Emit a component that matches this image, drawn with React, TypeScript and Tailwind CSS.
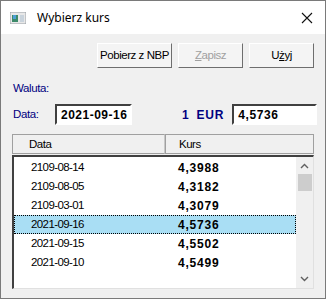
import React from "react";

type Rate = { date: string, rate: string };

const rates: Rate[] = [
	{ date: "2109-08-14", rate: "4,3988" },
	{ date: "2109-08-05", rate: "4,3182" },
	{ date: "2109-03-01", rate: "4,3079" },
	{ date: "2021-09-16", rate: "4,5736" },
	{ date: "2021-09-15", rate: "4,5502" },
	{ date: "2021-09-10", rate: "4,5499" },
];

const selected = "2021-09-16";

function TitleBar() {
	return (
	<div className="flex flex-row items-center h-[33px] bg-white pl-[9px] pr-[12px]">
		<svg width="16" height="12" viewBox="0 0 16 12" className="mr-[11px]">
			<rect x="0" y="0" width="16" height="12" fill="#e8e8e8" stroke="#9aa0a6" />
			<rect x="2" y="3" width="6" height="7" fill="#3d8a6a" />
			<rect x="3" y="3" width="3" height="4" fill="#4e9fd6" />
			<rect x="10" y="3" width="4" height="7" fill="#c9d3dc" />
		</svg>
		<span className="text-[12px] text-black" style={{ fontFamily: "'Noto Sans', sans-serif" }}>Wybierz kurs</span>
		<svg width="12" height="12" viewBox="0 0 12 12" className="ml-auto">
			<path d="M1 1 L11 11 M11 1 L1 11" stroke="#111" strokeWidth="1.1" />
		</svg>
	</div>
	);
}

function WinButton(props: { children: React.ReactNode, disabled?: boolean, width: string }) {
	const text = props.disabled ? "text-[#a0a0a0]" : "text-black";
	return (
	<div className={`${props.width} h-[25px] flex items-center justify-center whitespace-nowrap bg-[#f4f4f4] border border-t-white border-l-white border-r-[#6e6e6e] border-b-[#6e6e6e] text-[11.5px] tracking-[-0.45px] ${text}`}>
		{props.children}
	</div>
	);
}

function ListRow(props: { row: Rate }) {
	const isSel = props.row.date === selected;
	const sel = isSel ? "bg-[#a9def4] border border-dotted border-black" : "border border-transparent";
	return (
	<div className={`flex flex-row items-center h-[19px] ${sel}`}>
		<span className="w-[163px] pl-[16px] text-[11.5px] tracking-[-0.6px]">{props.row.date}</span>
		<span className="font-bold text-[12px] tracking-[0.8px]">{props.row.rate}</span>
	</div>
	);
}

export default function App() {
	return (
	<div className="w-[326px] h-[299px] bg-[#f0f0f0] border border-[#7a7a7a] flex flex-col text-black" style={{ fontFamily: "'Liberation Sans', Arial, sans-serif" }}>
		<TitleBar />
		<div className="flex flex-row justify-end gap-[6px] pr-[11px] pt-[9px]">
			<WinButton width="w-[75px]">Pobierz z NBP</WinButton>
			<WinButton width="w-[65px]" disabled><span><u>Z</u>apisz</span></WinButton>
			<WinButton width="w-[65px]"><span>U<u>ż</u>yj</span></WinButton>
		</div>

		<div className="text-[#000080] text-[11.5px] tracking-[-0.4px] pl-[12px] mt-[12px]">Waluta:</div>

		<div className="flex flex-row items-center pl-[12px] mt-[7px]">
			<span className="text-[#000080] text-[11.5px] tracking-[-0.4px] w-[42px]">Data:</span>
			<div className="w-[77px] h-[21px] bg-white border-2 border-t-[#404040] border-l-[#404040] border-r-white border-b-white flex items-center pl-[4px] font-bold text-[12px] tracking-[0.5px]">2021-09-16</div>
			<span className="text-[#000080] font-bold text-[12px] ml-[50px] tracking-[0.8px]">1</span>
			<span className="text-[#000080] font-bold text-[12px] ml-[7px] tracking-[0.8px]">EUR</span>
			<div className="w-[85px] h-[21px] ml-[8px] bg-white border-2 border-t-[#404040] border-l-[#404040] border-r-white border-b-white flex items-center pl-[4px] font-bold text-[12px] tracking-[0.6px]">4,5736</div>
		</div>

		<div className="mx-[11px] mt-[9px] flex flex-col">
			<div className="flex flex-row h-[20px] text-[11.5px] tracking-[-0.5px]">
				<div className="w-[153px] border border-[#a0a0a0] border-r-[#c8c8c8] bg-[#f0f0f0] pl-[16px] flex items-center">Data</div>
				<div className="flex-grow border border-[#a0a0a0] bg-[#f0f0f0] pl-[13px] flex items-center">Kurs</div>
			</div>
			<div className="h-[134px] mt-[1px] bg-white border-t-2 border-l-2 border-t-[#404040] border-l-[#404040] border-r border-b border-r-[#e0e0e0] border-b-[#e0e0e0] flex flex-row">
				<div className="flex-grow flex flex-col pt-[1px]">
					{rates.map(r => <ListRow key={r.date} row={r} />)}
				</div>
				<div className="w-[17px] bg-[#f0f0f0] flex flex-col items-center">
					<svg width="9" height="6" viewBox="0 0 9 6" className="mt-[6px]">
						<path d="M1 5 L4.5 1.5 L8 5" stroke="#606060" strokeWidth="1.4" fill="none" />
					</svg>
					<div className="w-[14px] h-[17px] bg-[#cdcdcd] mt-[5px]" />
					<svg width="9" height="6" viewBox="0 0 9 6" className="mt-auto mb-[6px]">
						<path d="M1 1 L4.5 4.5 L8 1" stroke="#606060" strokeWidth="1.4" fill="none" />
					</svg>
				</div>
			</div>
		</div>
	</div>
	);
}
